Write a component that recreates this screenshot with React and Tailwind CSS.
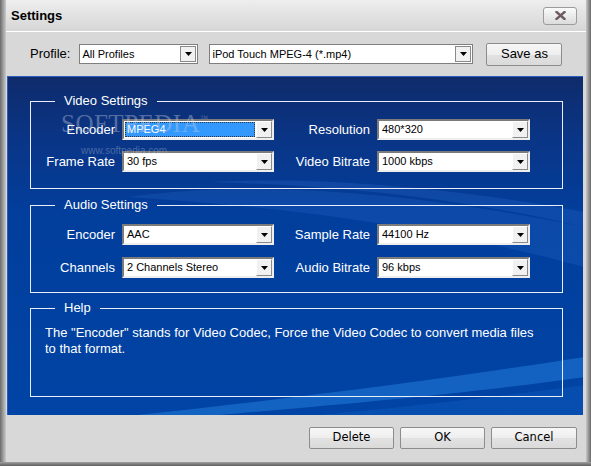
// Settings dialog
const Arrow = ({ thin }) => (
	<div className={thin
		? "w-[16px] h-[16px] my-[1px] mr-[1px] bg-[#f1f1f1] border border-[#8a8a8a] flex items-center justify-center"
		: "w-[16px] h-full bg-[#f1f1f1] border border-t-white border-l-white border-b-[#8a8a8a] border-r-[#8a8a8a] flex items-center justify-center"}>
		<svg width="7" height="4" viewBox="0 0 7 4"><path d="M0 0H7L3.5 4Z" fill="#000" /></svg>
	</div>
);

function Combo({ value, w, focused }) {
	return (
		<div className={`${w} h-[21px] flex bg-white border-2 border-t-[#7b7b7b] border-l-[#7b7b7b] border-b-[#eeeeee] border-r-[#eeeeee]`}>
			<div className="flex-1 min-w-0 flex items-center p-px">
				{focused ? (
					<span className="h-full flex-1 flex items-center pl-[2px] bg-[#3399ff] text-white text-[11px] outline outline-1 outline-dotted outline-[#333] -outline-offset-1">
						{value}
					</span>
				) : (
					<span className="pl-[2px] text-[11px] text-black">{value}</span>
				)}
			</div>
			<Arrow />
		</div>
	);
}

function Row({ l1, v1, l2, v2, focused }) {
	return (
		<div className="flex items-center h-[21px]">
			<span className="w-[91px] pr-[7px] text-right text-[13px] text-white">{l1}</span>
			<Combo w="w-[152px]" value={v1} focused={focused} />
			<span className="w-[103px] pr-[7px] text-right text-[13px] text-white">{l2}</span>
			<Combo w="w-[153px]" value={v2} />
		</div>
	);
}

function Group({ title, className, children }) {
	return (
		<fieldset className={`w-[533px] border border-[#e9eef8] px-0 ${className}`}>
			<legend className="ml-[24px] px-[9px] text-[13px] leading-[16px] text-white">{title}</legend>
			{children}
		</fieldset>
	);
}

const Btn = ({ children, className }) => (
	<button className={`border border-[#8c8c8c] rounded-[2px] bg-[linear-gradient(#f7f7f7,#eeeeee_50%,#e2e2e2_50%,#dadada)] text-black ${className}`}>
		{children}
	</button>
);

export default function App() {
	return (
		<div className="w-[591px] h-[466px] flex flex-col bg-[#8a8a8a] font-['Liberation_Sans',Arial,sans-serif] select-none">
			<div className="flex flex-1">
				<div className="w-[6px] bg-gradient-to-r from-[#6a6a6a] via-[#9c9c9c] to-[#cacaca]" />

				<div className="flex-1 flex flex-col bg-[#d8d8d8]">
					{/* TITLE */}
					<div className="h-[31px] flex items-center justify-between pl-[5px] pr-[9px] bg-gradient-to-b from-[#eeeeee] to-[#d6d6d6]">
						<span className="text-[13px] font-bold text-black">Settings</span>
						<div className="w-[34px] h-[18px] rounded-[3px] border border-[#9c9c9c] bg-gradient-to-b from-[#fafafa] to-[#dcdcdc] flex items-center justify-center">
							<svg width="11" height="9" viewBox="0 0 11 9">
								<path d="M1.5 1L9.5 8M9.5 1L1.5 8" stroke="#6e5c5e" strokeWidth="2.4" strokeLinecap="square" />
							</svg>
						</div>
					</div>
					<div className="h-px bg-white" />

					{/* PROFILE */}
					<div className="h-[44px] flex items-center pl-[24px]">
						<span className="text-[13px] text-black">Profile:</span>
						<div className="ml-[9px] w-[119px] h-[20px] flex bg-white border border-[#7f7f7f]">
							<span className="flex-1 pl-[2px] flex items-center text-[11px] text-black">All Profiles</span>
							<Arrow thin />
						</div>
						<div className="ml-[11px] w-[264px] h-[20px] flex bg-white border border-[#7f7f7f]">
							<span className="flex-1 pl-[2px] flex items-center text-[11px] text-black">iPod Touch MPEG-4 (*.mp4)</span>
							<Arrow thin />
						</div>
						<Btn className="ml-[13px] w-[76px] h-[23px] text-[13px]">Save as</Btn>
					</div>

					{/* BLUE PANEL */}
					<div className="relative ml-[1px] w-[576px] h-[339px] overflow-hidden border-t border-l border-[#2a5cbc] bg-[linear-gradient(180deg,#0f2b6b_0%,#0a3586_18%,#023e9c_40%,#0044a5_100%)] pt-[16px] pl-[22px]">
						<svg className="absolute inset-0 pointer-events-none" width="576" height="339" viewBox="0 0 576 339">
							<path d="M120 120 C260 100 430 120 576 150 L576 190 C430 150 280 130 120 120 Z" fill="#2a6ad0" opacity="0.25" />
							<path d="M200 105 C330 98 470 115 576 135 L576 150 C450 120 320 108 200 105 Z" fill="#3a7ee0" opacity="0.2" />
							<path d="M120 339 C300 320 450 300 576 280 L576 300 C450 318 300 330 200 339 Z" fill="#2b8ae6" opacity="0.45" />
							<path d="M300 339 C420 328 500 318 576 308 L576 339 Z" fill="#0a55b8" opacity="0.6" />
						</svg>

						<div className="relative flex flex-col">
							<Group title="Video Settings" className="pt-[10px] pb-[16px]">
								<div className="flex flex-col gap-[11px]">
									<Row l1="Encoder" v1="MPEG4" l2="Resolution" v2="480*320" focused />
									<Row l1="Frame Rate" v1="30 fps" l2="Video Bitrate" v2="1000 kbps" />
								</div>
							</Group>

							<Group title="Audio Settings" className="mt-[8px] pt-[11px] pb-[14px]">
								<div className="flex flex-col gap-[12px]">
									<Row l1="Encoder" v1="AAC" l2="Sample Rate" v2="44100 Hz" />
									<Row l1="Channels" v1="2 Channels Stereo" l2="Audio Bitrate" v2="96 kbps" />
								</div>
							</Group>

							<Group title="Help" className="mt-[7px] pt-[9px] h-[97px]">
								<p className="pl-[14px] text-[13px] leading-[16px] text-white">
									The "Encoder" stands for Video Codec, Force the Video Codec to convert media files<br />
									to that format.
								</p>
							</Group>
						</div>

						{/* watermark */}
						<div className="absolute left-[53px] top-[36px] pointer-events-none text-[#c9cfdc]/40 font-['Liberation_Serif',serif]">
							<span className="text-[25px] leading-[22px] tracking-[0.5px]">SOFTPEDIA</span>
							<span className="text-[8px] align-top">™</span>
						</div>
						<div className="absolute left-[73px] top-[66px] pointer-events-none text-[10px] text-[#c9cfdc]/35">
							www.softpedia.com
						</div>
					</div>

					{/* FOOTER */}
					<div className="flex-1 flex justify-end items-start pt-[12px] pr-[9px] gap-[6px]">
						<Btn className="w-[85px] h-[22px] text-[11.5px] font-['DejaVu_Sans',sans-serif]">Delete</Btn>
						<Btn className="w-[85px] h-[22px] text-[11.5px] font-['DejaVu_Sans',sans-serif]">OK</Btn>
						<Btn className="w-[86px] h-[22px] text-[11.5px] font-['DejaVu_Sans',sans-serif]">Cancel</Btn>
					</div>
				</div>

				<div className="w-[5px] bg-gradient-to-r from-[#c8c8c8] to-[#6a6a6a]" />
			</div>
			<div className="h-[4px] bg-gradient-to-b from-[#a0a0a0] to-[#5e5e5e]" />
		</div>
	);
}
